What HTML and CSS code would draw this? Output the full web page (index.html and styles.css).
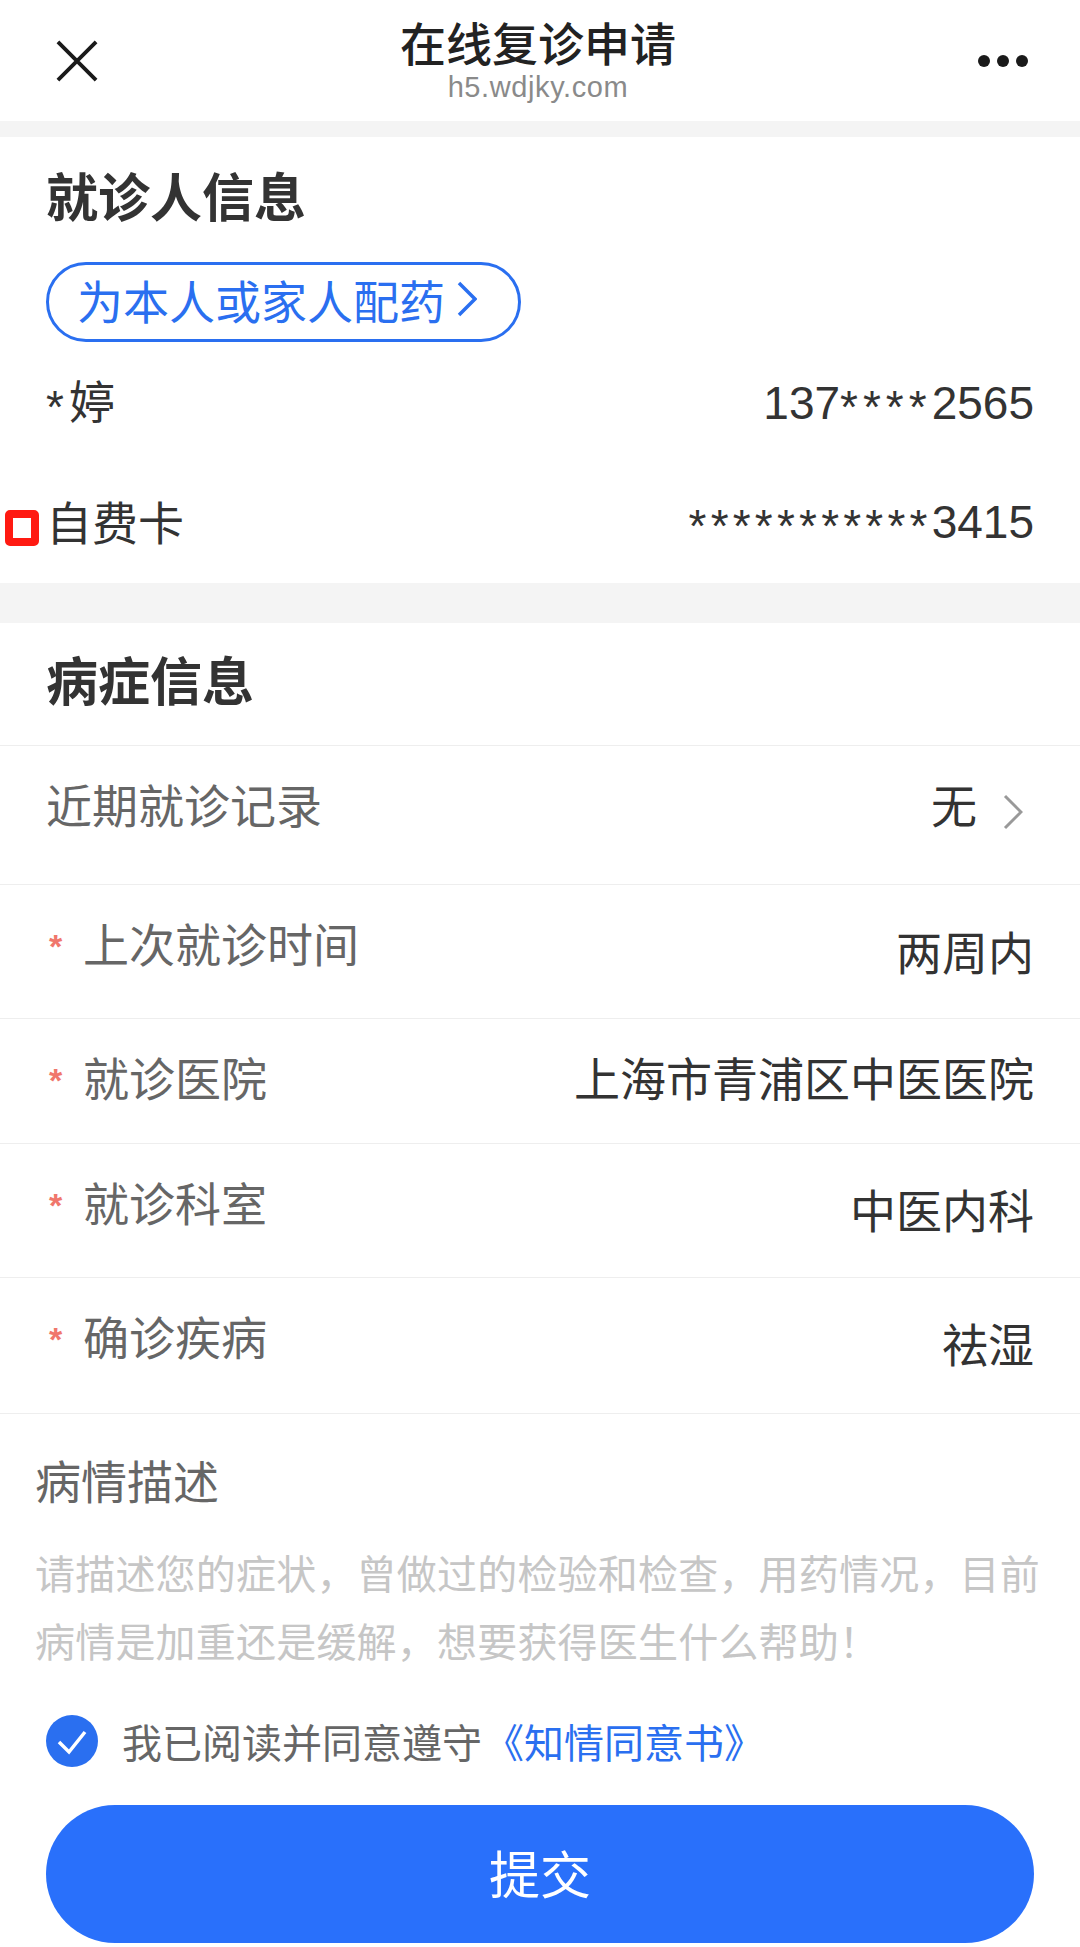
FILE: index.html
```html
<!DOCTYPE html>
<html lang="zh-CN">

<head>
    <meta charset="UTF-8" />
    <title>在线复诊申请</title>
    <link rel="stylesheet" href="styles.css">
</head>

<body>
    <header class="topbar">
        <svg class="icon-close" viewBox="0 0 44 44">
            <path d="M2 2L42 42M42 2L2 42" />
        </svg>
        <div class="topbar-title">
            <div class="title">在线复诊申请</div>
            <div class="domain">h5.wdjky.com</div>
        </div>
        <div class="icon-more"><i></i><i></i><i></i></div>
    </header>

    <div class="band band-top"></div>

    <section class="patient">
        <h3 class="patient-title">就诊人信息</h3>
        <div class="pill">
            <span>为本人或家人配药</span>
            <svg class="pill-arrow" viewBox="0 0 20 36">
                <path d="M2 2L18 18L2 34" />
            </svg>
        </div>
        <div class="info-row info-name">
            <span><span class="mask">*</span>婷</span>
            <span>137<span class="mask">****</span>2565</span>
        </div>
        <div class="info-row info-card">
            <span class="card-name"><i class="red-mark"></i>自费卡</span>
            <span><span class="mask">***********</span>3415</span>
        </div>
    </section>

    <div class="band band-mid"></div>

    <section class="disease">
        <h3 class="disease-title">病症信息</h3>
        <div class="row row-record">
            <span class="label">近期就诊记录</span>
            <span class="value">无
                <svg class="row-arrow" viewBox="0 0 20 36">
                    <path d="M2 2L18 18L2 34" />
                </svg>
            </span>
        </div>
        <div class="row row-last">
            <span class="label"><b>*</b>上次就诊时间</span>
            <span class="value">两周内</span>
        </div>
        <div class="row row-hospital">
            <span class="label"><b>*</b>就诊医院</span>
            <span class="value">上海市青浦区中医医院</span>
        </div>
        <div class="row row-dept">
            <span class="label"><b>*</b>就诊科室</span>
            <span class="value">中医内科</span>
        </div>
        <div class="row row-diag">
            <span class="label"><b>*</b>确诊疾病</span>
            <span class="value">祛湿</span>
        </div>
        <div class="desc">
            <div class="desc-label">病情描述</div>
            <div class="desc-hint">请描述您的症状，曾做过的检验和检查，用药情况，目前病情是加重还是缓解，想要获得医生什么帮助！</div>
        </div>
    </section>

    <div class="agree">
        <svg class="check" viewBox="0 0 52 52">
            <circle cx="26" cy="26" r="26" />
            <path d="M13 27L23 37L39 17" />
        </svg>
        <span>我已阅读并同意遵守</span>
        <a class="agree-link">《知情同意书》</a>
    </div>
    <button class="submit">提交</button>
</body>

</html>
```

FILE: styles.css
```css
:root {
    --blue: #2a6ff0;
    --text-color: #333;
    --label-color: #666;
    --line: #eeeeee;
    --band: #f4f4f4;
}

* {
    box-sizing: border-box;
}

body {
    margin: 0;
    width: 1080px;
    height: 1947px;
    overflow: hidden;
    background: #fff;
    color: var(--text-color);
    font-family: "Liberation Sans", "Noto Sans CJK SC", sans-serif;
    font-size: 46px;
}

.topbar {
    height: 121px;
    padding: 0 52px 0 56px;
    display: flex;
    align-items: flex-start;
    justify-content: space-between;
}

.icon-close {
    width: 42px;
    height: 42px;
    margin-top: 40px;
    fill: none;
    stroke: #1a1a1a;
    stroke-width: 4;
}

.topbar-title {
    text-align: center;
    padding-top: 20px;
}

.title {
    font-size: 46px;
    line-height: 50px;
    font-weight: 500;
    color: #222;
}

.domain {
    font-size: 29px;
    line-height: 28px;
    margin-top: 3px;
    color: #8a8a8a;
    letter-spacing: 0.6px;
}

.icon-more {
    display: flex;
    gap: 7px;
    margin-top: 55px;
}

.icon-more i {
    width: 12px;
    height: 12px;
    border-radius: 50%;
    background: #1a1a1a;
}

.band {
    background: var(--band);
}

.band-top {
    height: 16px;
}

.band-mid {
    height: 40px;
}

.patient {
    height: 446px;
    padding: 32px 46px 0 46px;
}

h3 {
    margin: 0;
    font-size: 52px;
    line-height: 60px;
    font-weight: 700;
}

.pill {
    margin-top: 33px;
    width: 475px;
    height: 80px;
    padding: 0 0 6px 28px;
    display: flex;
    align-items: center;
    gap: 12px;
    border: 3px solid var(--blue);
    border-radius: 40px;
    color: var(--blue);
    font-size: 46px;
}

.pill-arrow {
    width: 20px;
    height: 36px;
    fill: none;
    stroke: var(--blue);
    stroke-width: 3.5;
}

.info-row {
    display: flex;
    justify-content: space-between;
    align-items: center;
    line-height: 56px;
}

.info-name {
    margin-top: 33px;
}

.info-card {
    margin-top: 59px;
}

.mask {
    letter-spacing: 5px;
    vertical-align: -4px;
}

.info-card .mask {
    letter-spacing: 4.2px;
}

.card-name {
    position: relative;
}

.red-mark {
    position: absolute;
    left: -41px;
    top: 14px;
    width: 34px;
    height: 36px;
    border: 8px solid #ff1a12;
    border-radius: 5px;
}

.disease-title {
    height: 123px;
    padding: 30px 46px 0 46px;
    border-bottom: 1px solid var(--line);
}

.row {
    display: flex;
    justify-content: space-between;
    align-items: flex-start;
    padding: 33px 46px 0 46px;
    border-bottom: 1px solid var(--line);
    line-height: 56px;
}

.row-record {
    height: 139px;
}

.row-last {
    height: 134px;
}

.row-hospital {
    height: 125px;
}

.row-dept {
    height: 134px;
}

.row-diag {
    height: 136px;
}

.label {
    color: var(--label-color);
    display: flex;
}

.label b {
    width: 37px;
    padding-left: 3px;
    color: #f0776c;
    font-weight: 700;
    font-size: 34px;
}

.value {
    color: var(--text-color);
    margin-top: 8px;
    display: flex;
    align-items: center;
}

.row-record .value {
    margin-top: 0;
}

.row-hospital .value {
    margin-top: 0;
}

.row-dept .value,
.row-diag .value {
    margin-top: 7px;
}

.row-arrow {
    width: 20px;
    height: 36px;
    margin-left: 26px;
    margin-right: 11px;
    margin-top: 10px;
    fill: none;
    stroke: #999;
    stroke-width: 3;
}

.desc {
    padding: 41px 30px 0 35px;
}

.desc-label {
    color: var(--label-color);
    line-height: 56px;
}

.desc-hint {
    margin-top: 30px;
    color: #c6c6c6;
    line-height: 68px;
    font-size: 40px;
    letter-spacing: 0.2px;
}

.agree {
    margin-top: 36px;
    padding-left: 46px;
    height: 56px;
    display: flex;
    align-items: center;
    font-size: 40px;
    color: var(--label-color);
}

.check {
    width: 52px;
    height: 52px;
    margin-right: 24px;
}

.check circle {
    fill: var(--blue);
}

.check path {
    fill: none;
    stroke: #fff;
    stroke-width: 3.5;
}

.agree-link {
    color: var(--blue);
    margin-left: 2px;
}

.submit {
    display: block;
    margin: 36px 0 0 46px;
    width: 988px;
    height: 138px;
    padding-bottom: 6px;
    border: none;
    border-radius: 69px;
    background: #2970fb;
    color: #fff;
    font-family: inherit;
    font-size: 51px;
}
```
